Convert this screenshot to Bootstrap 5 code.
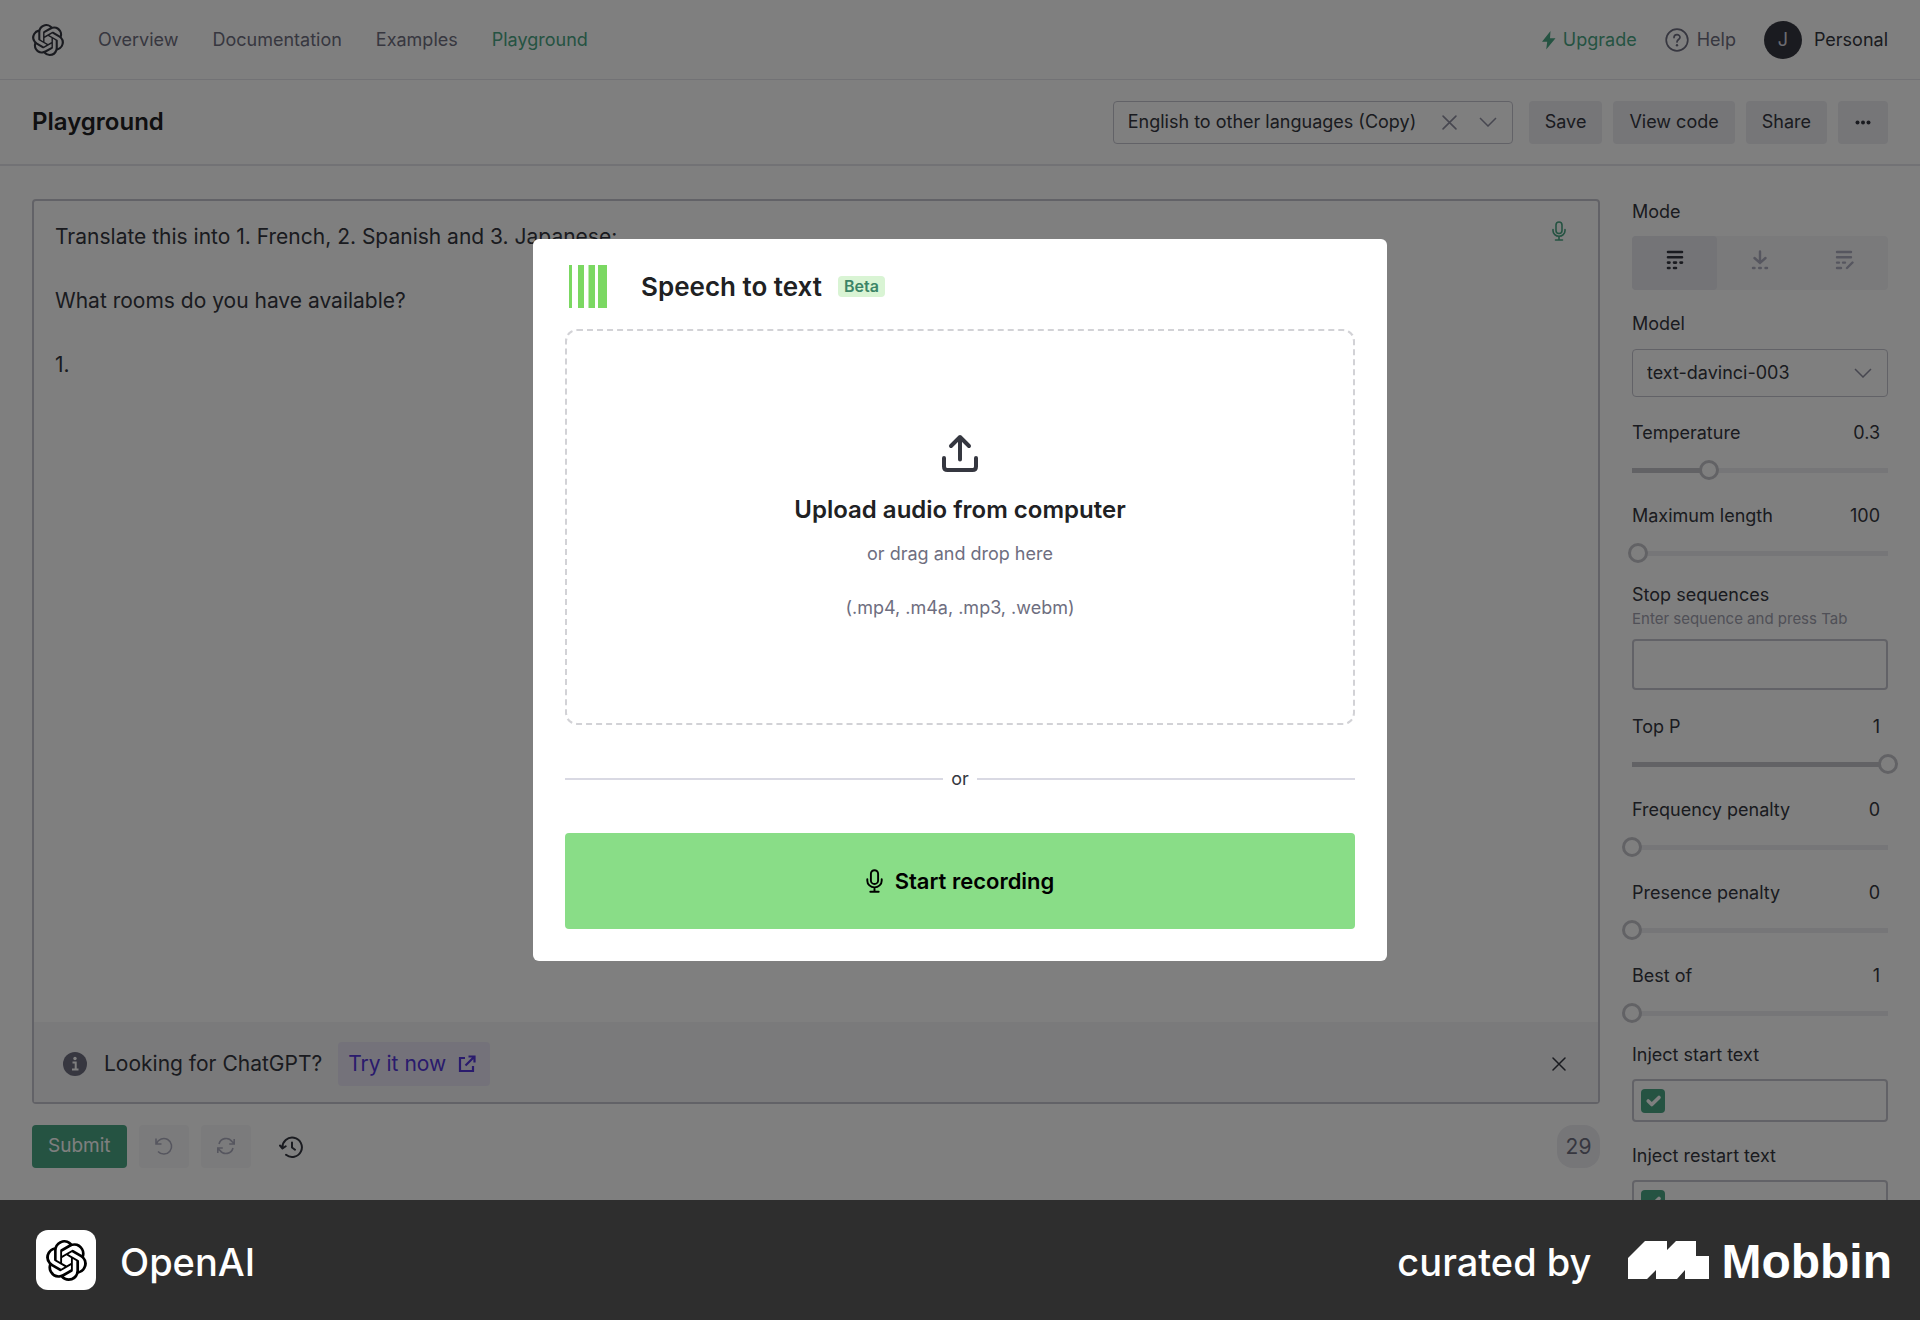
<!DOCTYPE html>
<html lang="en">
<head>
<meta charset="utf-8">
<meta name="viewport" content="width=device-width, initial-scale=1">
<title>Playground - OpenAI API</title>
<link href="https://cdn.jsdelivr.net/npm/bootstrap@5.3.0/dist/css/bootstrap.min.css" rel="stylesheet">
<style>
  :root { --ink: #353740; --muted: #6e6e80; --line: #c5c5ce; --fill-soft: #ececf1; --green: #4aa684; }
  body { font-family: Inter, "Liberation Sans", sans-serif; font-size: 18px; line-height: 24px; color: var(--ink); height: 100vh; }
  a { text-decoration: none; }
  svg { display: block; flex: none; }
  .app-shell { min-height: 0; }
  .top-bar { height: 80px; border-bottom: 1px solid #e5e5ea; }
  .sub-bar { height: 86px; border-bottom: 2px solid #e5e5ea; }
  .top-bar a { color: var(--muted); }
  .top-bar a.is-green, .is-green { color: var(--green); }
  .top-bar a.is-ink { color: var(--ink); }
  .site-links { gap: 34px; }
  .account-links { gap: 28px; }
  .page-title { font-size: 24px; line-height: 32px; font-weight: 600; color: #202123; }
  .avatar { width: 38px; height: 38px; background: #353740; color: #d9d9e3; }
  .soft-btn { background: var(--fill-soft); border: 0; border-radius: 4px; color: var(--ink); font-size: 18px; line-height: 24px; padding: 9px 16px 10px; }
  .soft-btn.faint { background: #f7f7f8; color: #acacbe; }
  .picker { position: relative; }
  .picker select { appearance: none; width: 100%; background: #fff; color: var(--ink); border: 1px solid var(--line); border-radius: 4px; padding: 8px 14px; font-size: 18px; line-height: 24px; height: 43px; }
  .picker.tall select { height: 48px; }
  .picker-tools { position: absolute; top: 0; bottom: 0; right: 16px; gap: 22px; color: #8e8ea0; pointer-events: none; }
  .plain-btn { background: none; border: 0; padding: 0; color: inherit; pointer-events: auto; }
  .preset { width: 400px; margin-right: 5px; }
  .preset-tools { gap: 11px; }
  .workspace { min-height: 0; padding: 33px 32px 0; gap: 32px; }
  .editor-column { padding-bottom: 32px; }
  .editor-panel { border: 2px solid var(--line); border-radius: 4px; position: relative; min-height: 0; }
  .editor-panel textarea { border: 0; resize: none; outline: 0; font-size: 21px; line-height: 32px; color: var(--ink); padding: 20px 64px 16px 21px; background: transparent; }
  .mic-corner { position: absolute; top: 20px; right: 32px; color: var(--green); }
  .notice-bar { background: #f4f4f6; height: 80px; padding: 4px 32px 0 28px; font-size: 21px; line-height: 28px; }
  .try-link { background: #e8e5f4; color: #5436da; border-radius: 4px; padding: 8px 14px 8px 10px; gap: 12px; }
  .action-row { gap: 12px; padding-top: 21px; }
  .submit-btn { background: var(--green); color: #fff; font-size: 19px; }
  .token-pill { background: var(--fill-soft); border-radius: 16px; width: 43px; height: 43px; font-size: 21px; color: #6e6e80; }
  .side-panel { width: 256px; flex: none; padding-top: 1px; }
  .mode-tabs { background: #f4f4f6; border-radius: 4px; margin: 12px 0 22px; }
  .mode-tabs button { background: none; border: 0; border-radius: 4px; height: 54px; padding: 0 0 6px; color: #acacbe; }
  .mode-tabs button.current { background: #e8e8ee; color: #353740; }
  .model-label { margin-bottom: 13px; }
  .slider-block { height: 83px; }
  .slider-block.group-start { margin-top: 24px; }
  .slider-block.group-end { height: 79px; }
  .slider-block output { padding-right: 8px; }
  .slider-block input { appearance: none; background: none; display: block; width: calc(100% + 20px); height: 20px; margin: 15px -10px 0; }
  .slider-block input::-webkit-slider-runnable-track { height: 20px; background:
      linear-gradient(#c5c5cb, #c5c5cb) 10px 50% / calc((100% - 20px) * var(--fill)) 5px no-repeat,
      linear-gradient(var(--fill-soft), var(--fill-soft)) 50% 50% / calc(100% - 20px) 5px no-repeat; }
  .slider-block input::-webkit-slider-thumb { appearance: none; width: 20px; height: 20px; border-radius: 50%; border: 3px solid #c5c5cb; background: #fff; }
  .hint { font-size: 15px; line-height: 24px; color: #a0a0ae; }
  .field-box { border: 2px solid var(--line); border-radius: 4px; background: #fff; width: 100%; }
  .stop-box { height: 51px; margin: 8px 0 25px; }
  .inject-box { height: 43px; padding: 0 7px; margin: 12px 0 22px; }
  .inject-box .form-check-input { width: 24px; height: 24px; margin: 0; border: 0; border-radius: 4px; background-color: var(--green); box-shadow: none; flex: none; }
  .inject-box input[type=text] { border: 0; outline: 0; min-width: 0; background: transparent; }
  .veil { position: absolute; inset: 0; background: rgba(0,0,0,.5); }
  .speech-card { width: 854px; background: #fff; border-radius: 6px; padding: 26px 32px 32px; }
  .speech-logo { margin-right: 34px; }
  .speech-title { font-size: 26px; line-height: 36px; font-weight: 600; color: #202123; }
  .beta-tag { background: #d9f4d4; color: #3c8467; font-size: 16px; line-height: 21px; font-weight: 600; padding: 0 6px; border-radius: 4px; }
  .drop-zone { border: 2px dashed #d2d2d6; border-radius: 12px; height: 396px; margin-top: 21px; cursor: pointer; color: var(--muted); }
  .drop-title { font-size: 24px; line-height: 32px; font-weight: 600; color: #202123; margin: 22px 0 16px; }
  .drop-formats { margin-top: 30px; }
  .or-row { margin: 42px 0; }
  .or-row i { height: 2px; background: #d9d9e3; }
  .record-btn { background: #89dd87; color: #000; border: 0; border-radius: 4px; height: 96px; width: 100%; font-size: 22px; font-weight: 600; gap: 12px; }
  .brand-bar { background: #2e2e2e; color: #fff; padding: 30px 28px 30px 36px; font-size: 38px; line-height: 56px; font-weight: 500; }
  .brand-tile { width: 60px; height: 60px; background: #fff; border-radius: 12px; color: #000; }
  .brand-text { padding-top: 4px; }
  .brand-mark { margin: 0 12px 0 37px; }
  .brand-word { font-family: "Liberation Sans", sans-serif; font-size: 48px; font-weight: 700; }
</style>
</head>
<body class="d-flex flex-column overflow-hidden">
<svg width="0" height="0" class="position-absolute" aria-hidden="true">
  <symbol id="knot" viewBox="0 0 24 24"><path fill="currentColor" d="M22.2819 9.8211a5.9847 5.9847 0 0 0-.5157-4.9108 6.0462 6.0462 0 0 0-6.5098-2.9A6.0651 6.0651 0 0 0 4.9807 4.1818a5.9847 5.9847 0 0 0-3.9977 2.9 6.0462 6.0462 0 0 0 .7427 7.0966 5.98 5.98 0 0 0 .511 4.9107 6.051 6.051 0 0 0 6.5146 2.9001A5.9847 5.9847 0 0 0 13.2599 24a6.0557 6.0557 0 0 0 5.7718-4.2058 5.9894 5.9894 0 0 0 3.9977-2.9001 6.0557 6.0557 0 0 0-.7475-7.0729zm-9.022 12.6081a4.4755 4.4755 0 0 1-2.8764-1.0408l.1419-.0804 4.7783-2.7582a.7948.7948 0 0 0 .3927-.6813v-6.7369l2.02 1.1686a.071.071 0 0 1 .038.052v5.5826a4.504 4.504 0 0 1-4.4945 4.4944zm-9.6607-4.1254a4.4708 4.4708 0 0 1-.5346-3.0137l.142.0852 4.783 2.7582a.7712.7712 0 0 0 .7806 0l5.8428-3.3685v2.3324a.0804.0804 0 0 1-.0332.0615L9.74 19.9502a4.4992 4.4992 0 0 1-6.1408-1.6464zM2.3408 7.8956a4.485 4.485 0 0 1 2.3655-1.9728V11.6a.7664.7664 0 0 0 .3879.6765l5.8144 3.3543-2.0201 1.1685a.0757.0757 0 0 1-.071 0l-4.8303-2.7865A4.504 4.504 0 0 1 2.3408 7.872zm16.5963 3.8558L13.1038 8.364 15.1192 7.2a.0757.0757 0 0 1 .071 0l4.8303 2.7913a4.4944 4.4944 0 0 1-.6765 8.1042v-5.6772a.79.79 0 0 0-.407-.667zm2.0107-3.0231l-.142-.0852-4.7735-2.7818a.7759.7759 0 0 0-.7854 0L9.409 9.2297V6.8974a.0662.0662 0 0 1 .0284-.0615l4.8303-2.7866a4.4992 4.4992 0 0 1 6.6802 4.66zM8.3065 12.863l-2.02-1.1638a.0804.0804 0 0 1-.038-.0567V6.0742a4.4992 4.4992 0 0 1 7.3757-3.4537l-.142.0805L8.704 5.459a.7948.7948 0 0 0-.3927.6813zm1.0976-2.3654l2.602-1.4998 2.6069 1.4998v2.9994l-2.5974 1.4997-2.6067-1.4997Z"/></symbol>
  <symbol id="mic" viewBox="0 0 14 20"><g fill="none" stroke="currentColor" stroke-width="1.6" stroke-linecap="round"><rect x="4" y="1" width="6" height="11.5" rx="3"/><path d="M1 8.5v1.2a6 5.6 0 0 0 12 0V8.5M7 15.3v3.5M3.5 19h7"/></g></symbol>
  <symbol id="chevron" viewBox="0 0 18 10"><path d="M1 1l8 8 8-8" fill="none" stroke="currentColor" stroke-width="1.5"/></symbol>
  <symbol id="cross" viewBox="0 0 14 14"><path d="M1 1l12 12M13 1L1 13" fill="none" stroke="currentColor" stroke-width="1.5" stroke-linecap="round"/></symbol>
</svg>

<div class="app-shell position-relative flex-fill d-flex flex-column overflow-hidden">
  <header class="top-bar d-flex align-items-center justify-content-between px-4 flex-shrink-0">
    <nav class="site-links d-flex align-items-center ms-2">
      <a href="#" class="is-ink" aria-label="OpenAI"><svg width="32" height="32"><use href="#knot"/></svg></a>
      <a href="#">Overview</a>
      <a href="#">Documentation</a>
      <a href="#">Examples</a>
      <a href="#" class="is-green">Playground</a>
    </nav>
    <div class="account-links d-flex align-items-center me-2">
      <a href="#" class="is-green d-flex align-items-center gap-1">
        <svg width="18" height="20" viewBox="0 0 18 20"><path d="M9.500 1L1 11.800h5.200L5.200 19.500l9.300-11.200H9z" fill="currentColor"/></svg>Upgrade</a>
      <a href="#" class="d-flex align-items-center gap-2">
        <svg width="24" height="24" viewBox="0 0 24 24" fill="none" stroke="currentColor" stroke-width="1.7"><circle cx="12" cy="12" r="10.8"/><path d="M9 9.6c0-4 6-3.800 6-.3 0 2.200-3 2.300-3 4.600" stroke-linecap="round"/><circle cx="12" cy="17.300" r="1.200" fill="currentColor" stroke="none"/></svg>Help</a>
      <a href="#" class="is-ink d-flex align-items-center gap-2">
        <span class="avatar rounded-circle d-flex align-items-center justify-content-center me-1">J</span>Personal</a>
    </div>
  </header>

  <div class="sub-bar d-flex align-items-center px-4 flex-shrink-0">
    <h1 class="page-title mb-0 ms-2 me-auto">Playground</h1>
    <div class="preset-tools d-flex align-items-center me-2">
      <div class="picker preset">
        <select aria-label="Preset"><option>English to other languages (Copy)</option></select>
        <span class="picker-tools d-flex align-items-center">
          <button class="plain-btn" type="button" aria-label="Clear preset"><svg width="15" height="15"><use href="#cross"/></svg></button>
          <svg width="18" height="10"><use href="#chevron"/></svg>
        </span>
      </div>
      <button class="soft-btn" type="button">Save</button>
      <button class="soft-btn" type="button">View code</button>
      <button class="soft-btn" type="button">Share</button>
      <button class="soft-btn" type="button" aria-label="More"><svg width="18" height="24" viewBox="0 0 18 24" fill="currentColor"><circle cx="3.500" cy="12.500" r="2"/><circle cx="9" cy="12.500" r="2"/><circle cx="14.500" cy="12.500" r="2"/></svg></button>
    </div>
  </div>

  <main class="workspace flex-fill d-flex">
    <section class="editor-column flex-fill d-flex flex-column">
      <div class="editor-panel flex-fill d-flex flex-column">
        <textarea class="flex-fill w-100" aria-label="Prompt" spellcheck="false">Translate this into 1. French, 2. Spanish and 3. Japanese:

What rooms do you have available?

1.</textarea>
        <button class="plain-btn mic-corner" type="button" aria-label="Record speech"><svg width="14" height="20"><use href="#mic"/></svg></button>
        <div class="notice-bar d-flex align-items-center">
          <svg width="26" height="26" viewBox="0 0 26 26" class="me-3"><circle cx="13" cy="13" r="12" fill="#6e6e80"/><circle cx="13" cy="7.500" r="1.700" fill="#fff"/><path d="M10.500 11.500h3.200v6.500M10 18.500h6.500" stroke="#fff" stroke-width="2" fill="none"/></svg>
          <span>Looking for ChatGPT?</span>
          <a href="#" class="try-link d-flex align-items-center ms-3">Try it now
            <svg width="18" height="18" viewBox="0 0 18 18" fill="none" stroke="currentColor" stroke-width="2.200"><path d="M7 3H2v13h13v-5M10.500 1.500h6v6M16 2L7.500 10.500"/></svg></a>
          <button class="plain-btn ms-auto" type="button" aria-label="Dismiss"><svg width="14" height="14"><use href="#cross"/></svg></button>
        </div>
      </div>
      <div class="action-row d-flex align-items-center flex-shrink-0">
        <button class="soft-btn submit-btn" type="button">Submit</button>
        <button class="soft-btn faint" type="button" aria-label="Undo"><svg width="18" height="24" viewBox="0 0 18 24" fill="none" stroke="currentColor" stroke-width="1.600"><path d="M1 4.500v5.500h5.500M1.500 9.500A7.800 7.800 0 1 1 3 17.500"/></svg></button>
        <button class="soft-btn faint" type="button" aria-label="Regenerate"><svg width="18" height="24" viewBox="0 0 18 24" fill="none" stroke="currentColor" stroke-width="1.600"><path d="M17.200 5v5h-5M.8 19v-5h5M2 10a7.300 7.300 0 0 1 13-2.500l2 2M16 14a7.300 7.300 0 0 1-13 2.500l-2-2"/></svg></button>
        <button class="plain-btn px-3" type="button" aria-label="History"><svg width="24" height="24" viewBox="0 0 24 24" fill="none" stroke="currentColor" stroke-width="2" stroke-linecap="round" stroke-linejoin="round"><path d="M3.500 13A9.700 9.700 0 1 1 7 19.800M1 10.500l2.500 3 3.200-2.200M13 7.500V12.500l3 2.200"/></svg></button>
        <span class="token-pill d-flex align-items-center justify-content-center ms-auto">29</span>
      </div>
    </section>

    <aside class="side-panel">
      <div>Mode</div>
      <div class="mode-tabs d-flex" role="group" aria-label="Mode">
        <button class="current flex-fill d-flex align-items-center justify-content-center" type="button" aria-label="Complete"><svg width="20" height="20" viewBox="-1 0 20 20" fill="none" stroke="currentColor" stroke-width="2.600" stroke-linecap="round"><path d="M2 2h14M2 7.200h14M2 12.600h1.500M8 12.600h2M14.500 12.600H16M2 18h1.500M8 18h2"/></svg></button>
        <button class="flex-fill d-flex align-items-center justify-content-center" type="button" aria-label="Insert"><svg width="20" height="20" viewBox="-1 0 20 20" fill="none" stroke="currentColor" stroke-width="2.400" stroke-linecap="round"><path d="M9 1.500v11M3.500 8L9 13l5.500-5M2 18h1.500M8.200 18h1.600M14.500 18H16"/></svg></button>
        <button class="flex-fill d-flex align-items-center justify-content-center" type="button" aria-label="Edit"><svg width="20" height="20" viewBox="0 0 20 20" fill="none" stroke="currentColor" stroke-width="2.400" stroke-linecap="round"><path d="M2 2h14M2 7.200h14M2 12.600h2M8 12.600h2M2 18h4M12 18l5.500-5.500"/></svg></button>
      </div>
      <label class="model-label d-block" for="model">Model</label>
      <div class="picker tall">
        <select id="model"><option>text-davinci-003</option></select>
        <span class="picker-tools d-flex align-items-center"><svg width="18" height="10"><use href="#chevron"/></svg></span>
      </div>

      <div class="slider-block group-start"><div class="d-flex justify-content-between"><label for="temperature">Temperature</label><output for="temperature">0.3</output></div>
        <input id="temperature" type="range" min="0" max="1" step="0.01" value="0.3" style="--fill:.3"></div>
      <div class="slider-block group-end"><div class="d-flex justify-content-between"><label for="max-length">Maximum length</label><output for="max-length">100</output></div>
        <input id="max-length" type="range" min="0" max="4000" value="100" style="--fill:.025"></div>

      <label class="d-block" for="stop">Stop sequences</label>
      <div class="hint">Enter sequence and press Tab</div>
      <input id="stop" type="text" class="field-box stop-box d-block">

      <div class="slider-block"><div class="d-flex justify-content-between"><label for="top-p">Top P</label><output for="top-p">1</output></div>
        <input id="top-p" type="range" min="0" max="1" step="0.01" value="1" style="--fill:1"></div>
      <div class="slider-block"><div class="d-flex justify-content-between"><label for="frequency">Frequency penalty</label><output for="frequency">0</output></div>
        <input id="frequency" type="range" min="0" max="2" step="0.01" value="0" style="--fill:0"></div>
      <div class="slider-block"><div class="d-flex justify-content-between"><label for="presence">Presence penalty</label><output for="presence">0</output></div>
        <input id="presence" type="range" min="0" max="2" step="0.01" value="0" style="--fill:0"></div>
      <div class="slider-block group-end"><div class="d-flex justify-content-between"><label for="best-of">Best of</label><output for="best-of">1</output></div>
        <input id="best-of" type="range" min="1" max="20" value="1" style="--fill:0"></div>

      <label class="d-block" for="inject-start">Inject start text</label>
      <div class="field-box inject-box d-flex align-items-center"><input class="form-check-input" type="checkbox" checked aria-label="Use start text"><input id="inject-start" class="flex-fill" type="text"></div>
      <label class="d-block" for="inject-restart">Inject restart text</label>
      <div class="field-box inject-box d-flex align-items-center"><input class="form-check-input" type="checkbox" checked aria-label="Use restart text"><input id="inject-restart" class="flex-fill" type="text"></div>
    </aside>
  </main>

  <div class="veil d-flex align-items-center justify-content-center">
    <section class="speech-card" role="dialog" aria-modal="true" aria-labelledby="speech-title">
      <div class="d-flex align-items-center">
        <svg class="speech-logo" width="42" height="43" viewBox="0 0 42 43" fill="#7bd862"><path d="M4 0h3v43H4zM13 0h6v43h-6zM23.500 0h6.500v43h-6.500zM33 0h9v43h-9z"/></svg>
        <h2 class="speech-title mb-0 me-3" id="speech-title">Speech to text</h2>
        <span class="beta-tag">Beta</span>
      </div>
      <label class="drop-zone d-flex flex-column align-items-center justify-content-center" for="audio">
        <svg width="38" height="38" viewBox="0 0 38 38" fill="none" stroke="#353740" stroke-width="4" stroke-linecap="round" stroke-linejoin="round"><path d="M19 25.500V3M10 12l9-9 9 9M3 24v8.500q0 3.500 3.500 3.500h25q3.500 0 3.500-3.500V24"/></svg>
        <span class="drop-title">Upload audio from computer</span>
        <span>or drag and drop here</span>
        <span class="drop-formats">(.mp4, .m4a, .mp3, .webm)</span>
        <input type="file" id="audio" class="visually-hidden">
      </label>
      <div class="or-row d-flex align-items-center gap-2"><i class="flex-fill"></i><span>or</span><i class="flex-fill"></i></div>
      <button class="record-btn d-flex align-items-center justify-content-center" type="button"><svg width="17" height="24"><use href="#mic"/></svg>Start recording</button>
    </section>
  </div>
</div>

<footer class="brand-bar d-flex align-items-center flex-shrink-0">
  <span class="brand-tile d-flex align-items-center justify-content-center me-4"><svg width="41" height="41"><use href="#knot"/></svg></span>
  <span class="brand-text me-auto">OpenAI</span>
  <span class="brand-text">curated by</span>
  <svg class="brand-mark" width="81" height="38" viewBox="0 0 81 38" fill="#fff"><path d="M0 17L17 0h22v9l9-9h20v15h13v23H57v-9l-8 9H28v-9l-9 9H0z"/></svg>
  <span class="brand-text brand-word">Mobbin</span>
</footer>
<script src="https://cdn.jsdelivr.net/npm/bootstrap@5.3.0/dist/js/bootstrap.bundle.min.js"></script>
</body>
</html>
